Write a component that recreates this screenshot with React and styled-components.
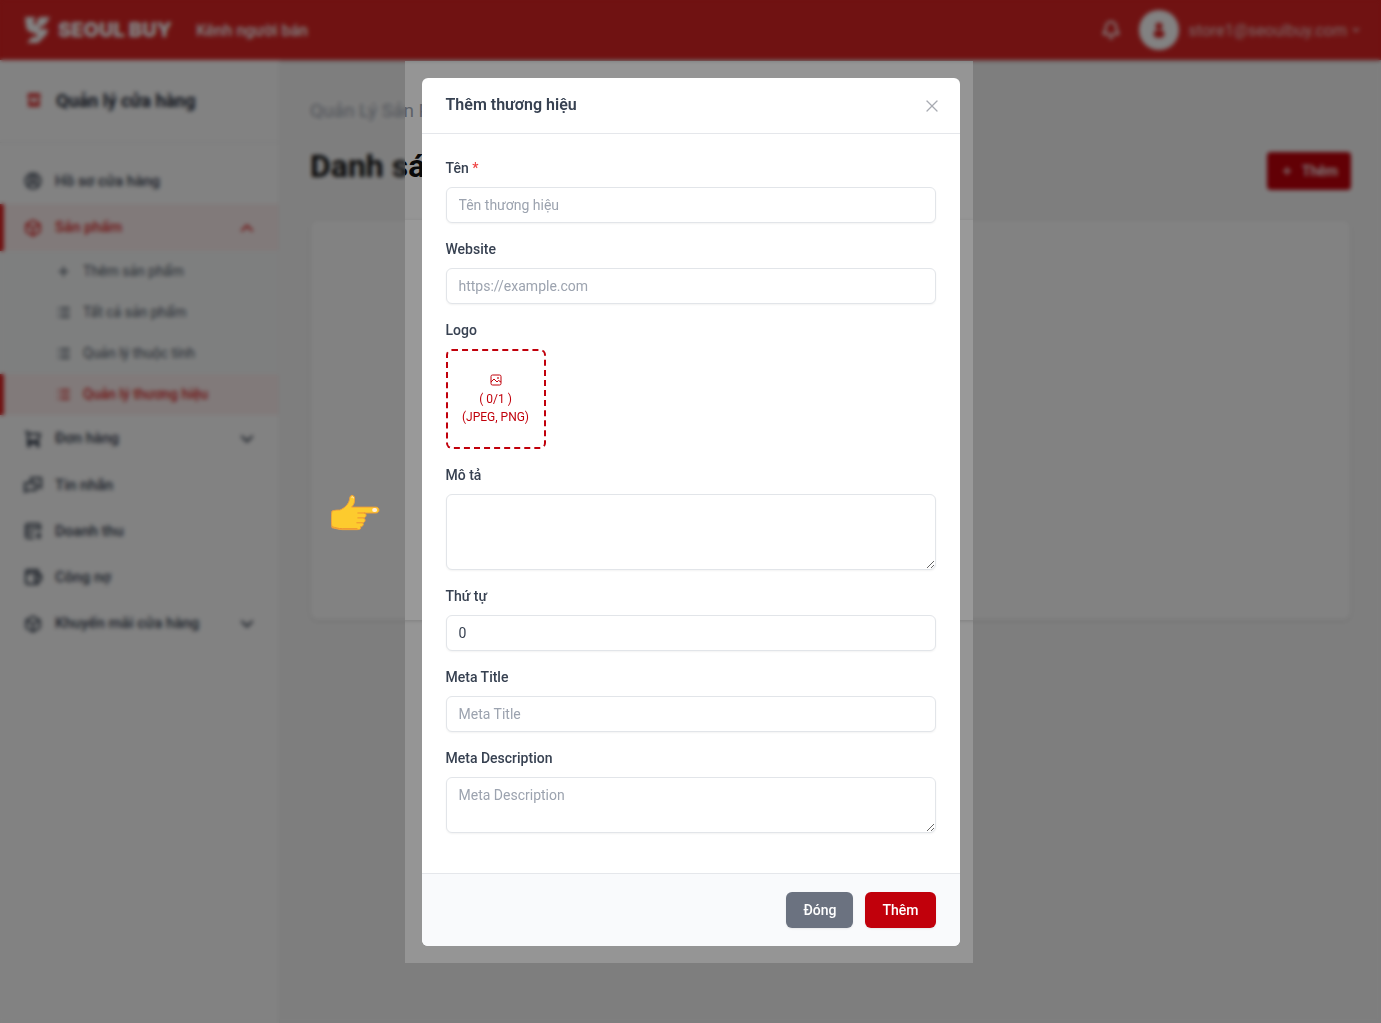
import React from "react";
import styled, { createGlobalStyle, css } from "styled-components";
import {
  Bell,
  Box,
  ChevronDown,
  ChevronUp,
  CircleUserRound,
  List,
  Plus,
  X,
} from "lucide-react";

const GlobalStyle = createGlobalStyle`
  *,
  *::before,
  *::after {
    box-sizing: border-box;
  }

  body {
    margin: 0;
    overflow-x: hidden;
    background: #f9f9f9;
    color: #374151;
    font-family: Roboto, "Noto Sans", sans-serif;
    font-size: 14px;
    line-height: 21px;
  }

  button,
  input,
  textarea {
    font: inherit;
  }
`;

const StyledPage = styled.div`
  display: flex;
  flex-direction: column;
  min-height: 100vh;
`;

const StyledTopBar = styled.header`
  display: flex;
  align-items: center;
  justify-content: space-between;
  height: 60px;
  padding: 0 20px 0 24px;
  background: #dc2626;
  color: #ffffff;
  box-shadow: 0 1px 4px rgba(0, 0, 0, 0.2);
`;

const StyledBrand = styled.a`
  display: flex;
  align-items: center;
  gap: 8px;
  color: inherit;
  font-family: Inter, sans-serif;
  font-weight: 900;
  font-size: 20px;
  text-decoration: none;
`;

const StyledBarGroup = styled.div`
  display: flex;
  align-items: center;
  gap: ${({ $gap }) => $gap}px;
`;

const StyledChannel = styled.span`
  font-weight: 500;
  font-size: 16px;
`;

const StyledIconButton = styled.button`
  display: flex;
  padding: 0;
  border: 0;
  background: none;
  color: inherit;
  cursor: pointer;
`;

const StyledAccount = styled.button`
  display: flex;
  align-items: center;
  gap: 10px;
  padding: 0;
  border: 0;
  background: none;
  color: #f3caca;
  font-size: 16px;
  cursor: pointer;
`;

const StyledAvatar = styled.span`
  display: flex;
  align-items: center;
  justify-content: center;
  width: 40px;
  height: 40px;
  border-radius: 50%;
  background: #ffffff;
`;

const StyledAccountName = styled.span`
  display: flex;
  align-items: center;
  gap: 4px;
`;

const StyledColumns = styled.div`
  display: flex;
  flex: 1;
`;

const StyledSidebar = styled.aside`
  flex: 0 0 280px;
  border-right: 1px solid #f0f0f2;
  background: #ffffff;
`;

const StyledSidebarTitle = styled.h2`
  display: flex;
  align-items: center;
  gap: 14px;
  height: 83px;
  margin: 0;
  padding: 0 26px 2px;
  border-bottom: 1px solid #f0f0f2;
  color: #1f2937;
  font-weight: 700;
  font-size: 18px;
`;

const StyledMenu = styled.nav`
  display: flex;
  flex-direction: column;
  padding-top: 15px;
`;

const activeItem = css`
  border-left-color: #dc2626;
  background: #fef0f0;
  color: #dc2626;
`;

const StyledMenuItem = styled.a`
  display: flex;
  align-items: center;
  gap: 13px;
  height: ${({ $expandable }) => ($expandable ? 47 : 46)}px;
  padding: 0 22px 0 20px;
  border-left: 4px solid transparent;
  color: #374151;
  font-weight: 500;
  font-size: 15px;
  text-decoration: none;
  ${({ $active }) => $active && activeItem}

  span {
    flex: 1;
  }
`;

const StyledSubmenu = styled.div`
  background: #f9fafb;
`;

const StyledSubmenuItem = styled.a`
  display: flex;
  align-items: center;
  gap: 12px;
  height: 41px;
  padding-left: 52px;
  border-left: 4px solid transparent;
  color: #4b5563;
  font-weight: ${({ $active }) => ($active ? 500 : 400)};
  font-size: 14px;
  text-decoration: none;
  ${({ $active }) => $active && activeItem}
`;

const StyledMain = styled.main`
  flex: 1;
  min-width: 0;
  padding: 38px 30px;
`;

const StyledBreadcrumb = styled.div`
  color: #9ca3af;
  font-size: 19px;
  line-height: 26px;
`;

const StyledPageHeading = styled.div`
  display: flex;
  align-items: center;
  justify-content: space-between;
  margin: 23px 0 25px;
`;

const StyledPageTitle = styled.h1`
  height: 48px;
  margin: 0;
  color: #111111;
  font-weight: 700;
  font-size: 32px;
  line-height: 38px;
`;

const StyledAddButton = styled.button`
  display: flex;
  align-items: center;
  gap: 9px;
  height: 38px;
  padding: 0 13px 0 14px;
  border: 0;
  border-radius: 4px;
  background: #c1000b;
  color: #ffffff;
  font-weight: 500;
  cursor: pointer;
`;

const StyledCard = styled.section`
  height: 400px;
  border-radius: 8px;
  background: #ffffff;
  box-shadow: 0 1px 4px rgba(0, 0, 0, 0.15);
`;

const StyledBackdrop = styled.div`
  position: fixed;
  inset: 0;
  background: rgba(0, 0, 0, 0.4);
`;

// Blurs everything except the window that is left clear around the dialog.
const StyledHaze = styled.div`
  --left: round(up, 50vw - 286px, 1px);
  --right: round(up, 50vw + 282px, 1px);
  --top: 61px;
  --bottom: 963px;

  position: absolute;
  inset: 0;
  background: rgba(0, 0, 0, 0.15);
  backdrop-filter: blur(2px);
  clip-path: polygon(
    evenodd,
    0 0,
    100% 0,
    100% 100%,
    0 100%,
    0 0,
    var(--left) var(--top),
    var(--right) var(--top),
    var(--right) var(--bottom),
    var(--left) var(--bottom),
    var(--left) var(--top)
  );
`;

const StyledOverlay = styled.div`
  position: absolute;
  inset: 0;
  display: flex;
  justify-content: center;
  align-items: flex-start;
  min-height: 100vh;
  padding: 78px 16px 16px;
`;

const StyledPointer = styled.svg`
  position: absolute;
  top: 494px;
  left: calc(50% - 360px);
  width: 49px;
  height: 37px;
`;

const StyledDialog = styled.form`
  width: 100%;
  max-width: 538px;
  border-radius: 6px;
  background: #ffffff;
  overflow: hidden;
`;

const StyledDialogHeader = styled.div`
  display: flex;
  align-items: center;
  justify-content: space-between;
  height: 56px;
  padding: 0 18px 0 24px;
  border-bottom: 1px solid #e5e7eb;
`;

const StyledDialogTitle = styled.h2`
  margin: 0;
  padding-bottom: 2px;
  font-weight: 600;
  font-size: 16px;
`;

const StyledCloseButton = styled(StyledIconButton)`
  color: #a8abb2;
`;

const StyledDialogBody = styled.div`
  display: flex;
  flex-direction: column;
  gap: 16px;
  padding: 24px 24px 40px;
`;

const StyledField = styled.div`
  display: flex;
  flex-direction: column;
  gap: 8px;
`;

const StyledLabel = styled.label`
  font-weight: 500;
`;

const StyledRequired = styled.span`
  color: #ef4444;
`;

const control = css`
  display: block;
  width: 100%;
  border: 1px solid #e2e5e9;
  border-radius: 6px;
  background: #ffffff;
  box-shadow: 0 1px 2px rgba(0, 0, 0, 0.05);
  color: #374151;
  outline: none;

  &::placeholder {
    color: #9ca3af;
  }

  &:focus {
    border-color: #c1000b;
  }
`;

const StyledInput = styled.input`
  ${control}
  height: 36px;
  padding: 0 12px;
  appearance: textfield;
`;

const StyledTextarea = styled.textarea`
  ${control}
  height: ${({ $height }) => $height}px;
  padding: 7px 12px;
  resize: vertical;
`;

const StyledUpload = styled.button`
  display: flex;
  flex-direction: column;
  align-items: center;
  justify-content: center;
  width: 100px;
  height: 100px;
  padding: 2px 0 0;
  border: 2px dashed #c1000b;
  border-radius: 6px;
  background: #ffffff;
  color: #c1000b;
  font-size: 12px;
  line-height: 18px;
  cursor: pointer;

  svg {
    margin-bottom: 4px;
  }
`;

const StyledDialogFooter = styled.div`
  display: flex;
  justify-content: flex-end;
  gap: 12px;
  padding: 18px 24px;
  border-top: 1px solid #e5e7eb;
  background: #f9fafc;
`;

const StyledButton = styled.button`
  height: 36px;
  padding: 0 17px;
  border: 0;
  border-radius: 6px;
  background: ${({ $primary }) => ($primary ? "#c1000b" : "#6b7280")};
  box-shadow: 0 1px 2px rgba(0, 0, 0, 0.08);
  color: #ffffff;
  font-weight: 500;
  cursor: pointer;
`;

const BrandMark = () => (
  <svg width="26" height="28" viewBox="0 0 26 28" fill="currentColor" aria-hidden="true">
    <path d="M1 1h10l-1.500 6 3.500 2V4l3-3h10l-4 7-8 5h10l-1 5-9 9H3l5-6h6l-2-3-8-3-2-4z" />
  </svg>
);

const StoreIcon = () => (
  <svg width="16" height="16" viewBox="0 0 16 16" fill="#dc2626" aria-hidden="true">
    <path d="M2 1h12l1 5H1zM2 7h3v3h6V7h3v8H2z" opacity=".85" />
  </svg>
);

const PersonIcon = () => (
  <svg width="12" height="16" viewBox="0 0 12 16" fill="#dc2626" aria-hidden="true">
    <circle cx="6" cy="4" r="3.5" />
    <path d="M6 8c3.500 0 5.500 1.500 5.500 4S9.500 16 6 16 .500 14.500.500 12 2.500 8 6 8z" />
  </svg>
);

const OutlineIcon = ({ size, children }) => (
  <svg
    width={size}
    height={size}
    viewBox="0 0 18 18"
    fill="none"
    stroke="currentColor"
    strokeWidth="2"
    strokeLinejoin="round"
    aria-hidden="true"
  >
    {children}
  </svg>
);

const CartIcon = ({ size }) => (
  <OutlineIcon size={size}>
    <path d="M1 2h3v11h11M4 4h12l-2 7H4" />
    <circle cx="5" cy="15.500" r="1" />
    <circle cx="14" cy="15.500" r="1" />
  </OutlineIcon>
);

const ChatIcon = ({ size }) => (
  <OutlineIcon size={size}>
    <path d="M7 6V2h10v10l-3-2M1 16V7h11v7H4z" />
  </OutlineIcon>
);

const RevenueIcon = ({ size }) => (
  <OutlineIcon size={size}>
    <path d="M16 8V4c0-1-1-2-2-2H4C3 2 2 3 2 4v10c0 1 1 2 2 2h6M2 6h14M2 11h8M15 10v7M12 14h5" />
  </OutlineIcon>
);

const WalletIcon = ({ size }) => (
  <OutlineIcon size={size}>
    <path d="M14 5V2H4C3 2 2 3 2 4v10c0 1 1 2 2 2h10v-3M2 5h12l3 2v5l-3 1h-3V8h5" />
  </OutlineIcon>
);

const ImageIcon = () => (
  <svg
    width="12"
    height="12"
    viewBox="0 0 12 12"
    fill="none"
    stroke="currentColor"
    strokeLinejoin="round"
    aria-hidden="true"
  >
    <rect x="1" y="1" width="10" height="10" rx="1.5" />
    <path d="M1 8l3-3 3 3 1.500-1.500L11 8" />
    <circle cx="8" cy="4" r=".5" />
  </svg>
);

const PointingHand = () => (
  <StyledPointer viewBox="0 0 50 37" aria-hidden="true">
    <path
      d="M1 17c3-1 6-1 8-1 5-2 9-6 10-11 0-6 6-5 5 1 0 3-1 5-3 7h25c4 0 4 6 0 6H34c3 1 2 5-1 5 3 1 2 5-1 5 2 1 1 4-2 4 1 2 0 3-3 3H12c-4 0-6-1-11-2-1-7-1-12 0-17z"
      fill="#fdcb2e"
      stroke="#f0a03a"
    />
    <path d="M1 33c4 1 6 2 11 2h15M35 19h-8M33 24h-6M32 29h-6" fill="none" stroke="#ee8f33" />
    <rect x="42" y="14" width="5" height="4" rx="2" fill="#fdeedd" />
    <path d="M21 3c1-1 2 0 2 1" fill="none" stroke="#fdeedd" />
  </StyledPointer>
);

const submenu = [
  { label: "Thêm sản phẩm", icon: Plus },
  { label: "Tất cả sản phẩm", icon: List },
  { label: "Quản lý thuộc tính", icon: List },
  { label: "Quản lý thương hiệu", icon: List, active: true },
];

const menu = [
  { label: "Hồ sơ cửa hàng", icon: CircleUserRound },
  { label: "Sản phẩm", icon: Box, active: true, items: submenu },
  { label: "Đơn hàng", icon: CartIcon, items: [] },
  { label: "Tin nhắn", icon: ChatIcon },
  { label: "Doanh thu", icon: RevenueIcon },
  { label: "Công nợ", icon: WalletIcon },
  { label: "Khuyến mãi cửa hàng", icon: Box, items: [] },
];

const Sidebar = () => (
  <StyledSidebar>
    <StyledSidebarTitle>
      <StoreIcon />
      Quản lý cửa hàng
    </StyledSidebarTitle>
    <StyledMenu>
      {menu.map(({ label, icon: Icon, active, items }) => {
        const Chevron = active ? ChevronUp : ChevronDown;

        return (
          <React.Fragment key={label}>
            <StyledMenuItem href="#" $active={active} $expandable={!!items}>
              <Icon size={18} strokeWidth={2.5} />
              <span>{label}</span>
              {items && <Chevron size={20} strokeWidth={2.5} />}
            </StyledMenuItem>
            {active && (
              <StyledSubmenu>
                {items.map(({ label: text, icon: SubIcon, active: current }) => (
                  <StyledSubmenuItem key={text} href="#" $active={current}>
                    <SubIcon size={15} strokeWidth={2.5} />
                    {text}
                  </StyledSubmenuItem>
                ))}
              </StyledSubmenu>
            )}
          </React.Fragment>
        );
      })}
    </StyledMenu>
  </StyledSidebar>
);

const BrandDialog = () => (
  <StyledDialog
    role="dialog"
    aria-labelledby="dialog-title"
    onSubmit={(event) => event.preventDefault()}
  >
    <StyledDialogHeader>
      <StyledDialogTitle id="dialog-title">Thêm thương hiệu</StyledDialogTitle>
      <StyledCloseButton type="button" aria-label="Đóng">
        <X size={20} strokeWidth={1.5} />
      </StyledCloseButton>
    </StyledDialogHeader>
    <StyledDialogBody>
      <StyledField>
        <StyledLabel htmlFor="name">
          Tên <StyledRequired>*</StyledRequired>
        </StyledLabel>
        <StyledInput id="name" placeholder="Tên thương hiệu" />
      </StyledField>
      <StyledField>
        <StyledLabel htmlFor="website">Website</StyledLabel>
        <StyledInput id="website" placeholder="https://example.com" />
      </StyledField>
      <StyledField>
        <StyledLabel htmlFor="logo">Logo</StyledLabel>
        <StyledUpload id="logo" type="button">
          <ImageIcon />
          <span>( 0/1 )</span>
          <span>(JPEG, PNG)</span>
        </StyledUpload>
      </StyledField>
      <StyledField>
        <StyledLabel htmlFor="description">Mô tả</StyledLabel>
        <StyledTextarea id="description" $height={76} />
      </StyledField>
      <StyledField>
        <StyledLabel htmlFor="order">Thứ tự</StyledLabel>
        <StyledInput id="order" type="number" defaultValue="0" />
      </StyledField>
      <StyledField>
        <StyledLabel htmlFor="meta-title">Meta Title</StyledLabel>
        <StyledInput id="meta-title" placeholder="Meta Title" />
      </StyledField>
      <StyledField>
        <StyledLabel htmlFor="meta-description">Meta Description</StyledLabel>
        <StyledTextarea id="meta-description" placeholder="Meta Description" $height={56} />
      </StyledField>
    </StyledDialogBody>
    <StyledDialogFooter>
      <StyledButton type="button">Đóng</StyledButton>
      <StyledButton type="submit" $primary>
        Thêm
      </StyledButton>
    </StyledDialogFooter>
  </StyledDialog>
);

const App = () => (
  <>
    <GlobalStyle />
    <StyledPage>
      <StyledTopBar>
        <StyledBarGroup $gap={24}>
          <StyledBrand href="#">
            <BrandMark />
            SEOUL BUY
          </StyledBrand>
          <StyledChannel>Kênh người bán</StyledChannel>
        </StyledBarGroup>
        <StyledBarGroup $gap={18}>
          <StyledIconButton type="button" aria-label="Thông báo">
            <Bell size={20} strokeWidth={2.5} />
          </StyledIconButton>
          <StyledAccount type="button">
            <StyledAvatar>
              <PersonIcon />
            </StyledAvatar>
            <StyledAccountName>
              store1@seoulbuy.com
              <ChevronDown size={10} strokeWidth={4} />
            </StyledAccountName>
          </StyledAccount>
        </StyledBarGroup>
      </StyledTopBar>
      <StyledColumns>
        <Sidebar />
        <StyledMain>
          <StyledBreadcrumb>Quản Lý Sản Phẩm</StyledBreadcrumb>
          <StyledPageHeading>
            <StyledPageTitle>Danh sách</StyledPageTitle>
            <StyledAddButton type="button">
              <Plus size={12} strokeWidth={3} />
              Thêm
            </StyledAddButton>
          </StyledPageHeading>
          <StyledCard />
        </StyledMain>
      </StyledColumns>
    </StyledPage>
    <StyledBackdrop />
    <StyledOverlay>
      <StyledHaze />
      <PointingHand />
      <BrandDialog />
    </StyledOverlay>
  </>
);

export default App;
